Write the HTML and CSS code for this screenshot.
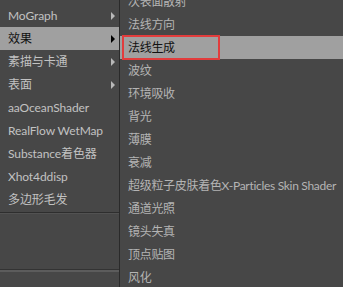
FILE: index.html
```html
<!DOCTYPE html>
<html lang="zh">
  <head>
    <meta charset="UTF-8" />
    <title>材质菜单</title>
    <link rel="stylesheet" href="styles.css">
  </head>
  <body>
    <div class="screen">
      <div class="side">
        <ul class="menu left">
          <li class="sub">MoGraph</li>
          <li class="sub active">效果</li>
          <li class="sub">素描与卡通</li>
          <li class="sub">表面</li>
          <li>aaOceanShader</li>
          <li>RealFlow WetMap</li>
          <li>Substance着色器</li>
          <li>Xhot4ddisp</li>
          <li>多边形毛发</li>
        </ul>
        <div class="panel"></div>
      </div>
      <ul class="menu right">
        <li>次表面散射</li>
        <li>法线方向</li>
        <li class="active marked">法线生成</li>
        <li>波纹</li>
        <li>环境吸收</li>
        <li>背光</li>
        <li>薄膜</li>
        <li>衰减</li>
        <li>超级粒子皮肤着色X-Particles Skin Shader</li>
        <li>通道光照</li>
        <li>镜头失真</li>
        <li>顶点贴图</li>
        <li>风化</li>
      </ul>
    </div>
  </body>
</html>
```

FILE: styles.css
```css
body {
  margin: 0;
  background-color: #474747;
  font-family: Lato, "Noto Sans CJK SC", sans-serif;
  font-size: 12px;
  overflow: hidden;
}

.screen {
  display: flex;
  height: 287px;
}

.side {
  width: 119px;
  display: flex;
  flex-direction: column;
  flex-shrink: 0;
}

.menu {
  list-style-type: none;
  margin: 0;
  padding: 0;
}

.menu li {
  height: 23px;
  line-height: 23px;
  white-space: nowrap;
  position: relative;
}

.left {
  padding-top: 4px;
  padding-bottom: 1px;
  border-bottom: 1px solid #2e2e2e;
  color: #c2c2c2;
  letter-spacing: -0.1px;
}

.left li {
  padding-left: 8px;
}

.left li.sub::after {
  content: "";
  position: absolute;
  right: 4px;
  top: 8px;
  border-left: 4px solid #b8b8b8;
  border-top: 4px solid transparent;
  border-bottom: 4px solid transparent;
}

.menu li.active {
  background-color: #a0a0a0;
  color: #111;
}

.left li.active::after {
  border-left-color: #000;
}

.panel {
  flex: 1;
  border-top: 1px solid #525252;
  display: flex;
  flex-direction: column;
  justify-content: flex-end;
  padding-bottom: 15px;
}

.panel::after {
  content: "";
  border-top: 1px solid #333;
  border-bottom: 2px solid #5c5c5c;
}

.right {
  flex: 1;
  margin-top: -10px;
  border-left: 1px solid #2a2a2a;
  color: #b4b4b4;
  letter-spacing: -0.3px;
}

.right li {
  padding-left: 8px;
}

.right li.marked::before {
  content: "";
  position: absolute;
  left: 2px;
  top: -1px;
  width: 94px;
  height: 21px;
  border: 2px solid #e23c3c;
}
```
